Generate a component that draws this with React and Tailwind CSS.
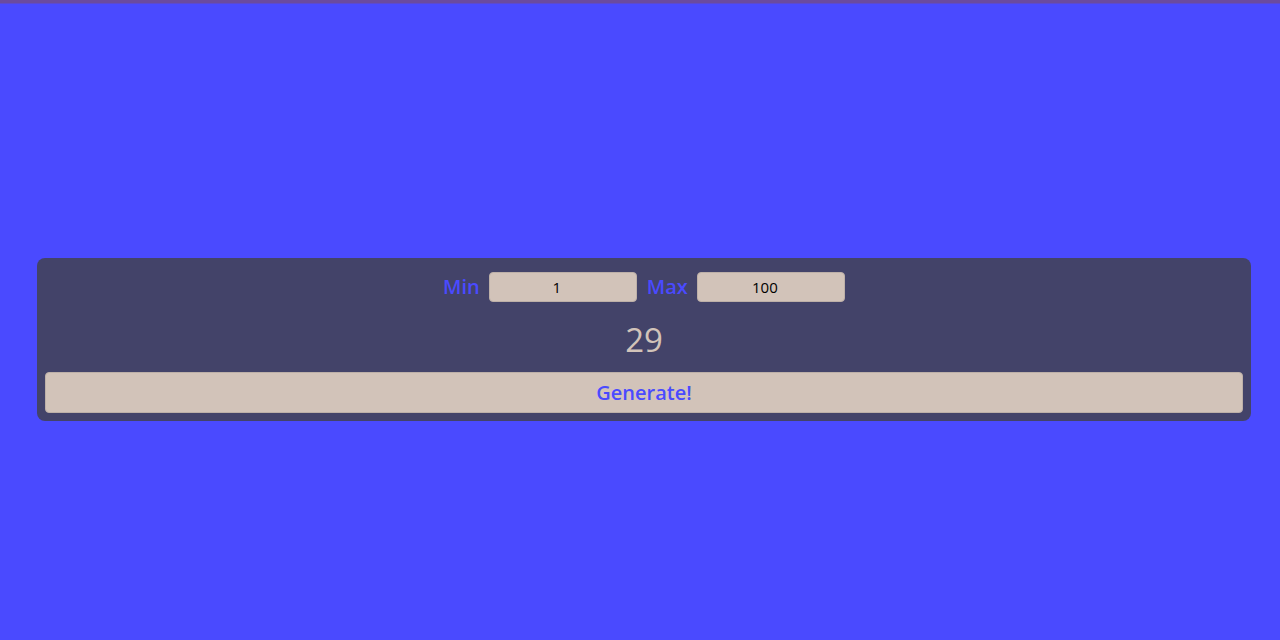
import { useState } from 'react';

export default function App() {
  const [min, setMin] = useState('1');
  const [max, setMax] = useState('100');
  const [value, setValue] = useState(29);

  const generate = () => {
    const lo = parseInt(min) || 0;
    const hi = parseInt(max) || 0;
    setValue(Math.floor(Math.random() * (hi - lo + 1)) + lo);
  };

  return (
    <div className="min-h-[640px] bg-[#4a4aff] font-['Open_Sans',sans-serif]">
      {/* top strip */}
      <div className="h-[3px] bg-[#6b4b9f]" />
      <div className="h-px bg-[#5c4acf]" />

      <div className="ml-[37px] mt-[254px] w-[1214px] rounded-lg bg-[#434369] p-2">
        <div className="mt-[6px] flex h-[30px] items-center justify-center">
          <span className="mr-[9px] text-[20px] font-semibold text-[#4a4aff]">Min</span>
          <input type="text" inputMode="numeric" value={min} onChange={e => setMin(e.target.value)} aria-label="Min"
            className="h-[30px] w-[148px] rounded border border-[#bdb0a8] bg-[#d2c3b9] pl-[2px] pr-[14px] text-center text-[15px] text-black outline-none" />
          <span className="ml-[10px] mr-[9px] text-[20px] font-semibold text-[#4a4aff]">Max</span>
          <input type="text" inputMode="numeric" value={max} onChange={e => setMax(e.target.value)} aria-label="Max"
            className="h-[30px] w-[148px] rounded border border-[#bdb0a8] bg-[#d2c3b9] pl-[2px] pr-[14px] text-center text-[15px] text-black outline-none" />
        </div>

        <div className="flex h-[70px] items-center justify-center pt-[6px] text-[33px] text-[#d2c3b9]">
          {value}
        </div>

        <button onClick={generate}
          className="h-[41px] w-full rounded border border-[#bdb0a8] bg-[#d2c3b9] text-[20px] font-semibold text-[#4a4aff]">
          Generate!
        </button>
      </div>
    </div>
  );
}
